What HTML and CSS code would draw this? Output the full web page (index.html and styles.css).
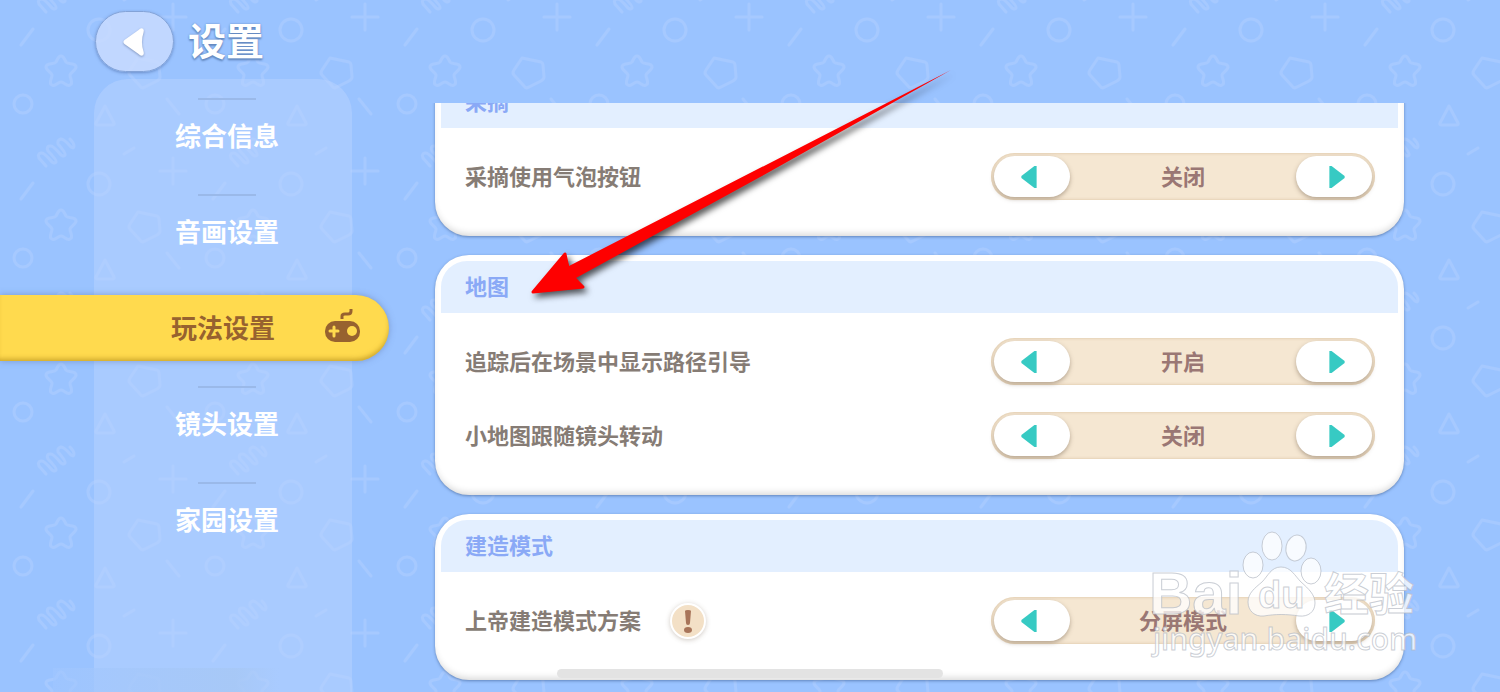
FILE: index.html
```html
<!DOCTYPE html>
<html lang="zh-CN">
<head>
    <meta charset="UTF-8" />
    <meta name="viewport" content="width=device-width, initial-scale=1.0" />
    <title>设置</title>
    <link rel="stylesheet" href="styles.css">
</head>
<body>
<!-- Background pattern -->
<svg class="pattern" aria-hidden="true">
    <defs>
        <pattern id="shapes" width="192" height="154" y="-22" patternUnits="userSpaceOnUse">
            <g transform="translate(0 21)" fill="none" stroke="#a6c9ff" stroke-width="3" stroke-linecap="round" stroke-linejoin="round">
                <circle cx="23" cy="105" r="9" />
                <circle cx="99" cy="31" r="11" />
                <path d="M61 57c2 0 3 2 5 6 2 3 10 0 10 5 0 3-5 5-6 8 0 4 4 8 0 10-3 2-6-3-9-3s-6 5-9 3c-4-2 0-6 0-10-1-3-6-5-6-8 0-5 8-2 10-5 2-4 3-6 5-6z" />
                <path d="M138 59l19 4q2 1 2 3l1 12q0 2-3 4l-12 6q-3 2-5-1l-10-11q-2-2 0-5z" />
                <path d="M105 107l9 17q1 2-2 2h-14q-3 0-2-2z" />
                <path d="M21 46l12-16M167 100l12 15M124 1l10-6M173 5v26M160 18h26" />
                <path d="M46 13l-7-8q-2-4 2-5 3-1 11 9 3 2 4 0 1-2-8-11-2-5 2-5 3-1 11 9 3 2 4 0 1-2-7-11-1-4 3-5 3 0 10 8 3 2 3-1 0-3-4-7" />
            </g>
        </pattern>
    </defs>
    <rect width="100%" height="100%" fill="url(#shapes)" />
</svg>

<header class="topbar">
    <button class="back-btn" type="button" aria-label="返回">
        <svg width="26" height="36" viewBox="0 0 24 34"><path d="M19 4q3 0 2 4-3 9 0 18 1 4-2 4-1 0-3-2L3 19q-2-2 0-4L16 6q2-2 3-2z" fill="#fff" /></svg>
    </button>
    <h1>设置</h1>
</header>

<div class="content">
    <nav class="sidebar">
        <a class="nav-item" href="#info">综合信息</a>
        <a class="nav-item" href="#av">音画设置</a>
        <a class="nav-item active" href="#play" aria-current="page">
            <span>玩法设置</span>
            <svg width="36" height="36" viewBox="0 0 36 36" aria-hidden="true">
                <path d="M17 11V8q0-2 3-2h3q3 0 3-3V1" fill="none" stroke="#97622f" stroke-width="3" />
                <rect x="0" y="13" width="35" height="21" rx="10" fill="#97622f" />
                <path d="M9 19v9M5 23h8" stroke="#ffda4e" stroke-width="3" stroke-linecap="round" />
                <circle cx="27" cy="23" r="5" fill="#ffda4e" />
            </svg>
        </a>
        <a class="nav-item" href="#camera">镜头设置</a>
        <a class="nav-item" href="#home">家园设置</a>
    </nav>

    <main class="panel" id="play">
        <section class="card">
            <h2>采摘</h2>
            <div class="rows">
                <div class="row">
                    <span class="label" id="bubble">采摘使用气泡按钮</span>
                    <div class="switcher" role="group" aria-labelledby="bubble">
                        <button class="prev" type="button" aria-label="上一项"><svg width="18" height="24" viewBox="0 0 16 22"><path d="M15 1v20h-2L1 12v-2L13 1z" /></svg></button>
                        <output>关闭</output>
                        <button class="next" type="button" aria-label="下一项"><svg width="18" height="24" viewBox="0 0 16 22"><path d="M1 1v20h2l12-9v-2L3 1z" /></svg></button>
                    </div>
                </div>
            </div>
        </section>

        <section class="card">
            <h2>地图</h2>
            <div class="rows">
                <div class="row">
                    <span class="label" id="track">追踪后在场景中显示路径引导</span>
                    <div class="switcher" role="group" aria-labelledby="track">
                        <button class="prev" type="button" aria-label="上一项"><svg width="18" height="24" viewBox="0 0 16 22"><path d="M15 1v20h-2L1 12v-2L13 1z" /></svg></button>
                        <output>开启</output>
                        <button class="next" type="button" aria-label="下一项"><svg width="18" height="24" viewBox="0 0 16 22"><path d="M1 1v20h2l12-9v-2L3 1z" /></svg></button>
                    </div>
                </div>
                <div class="row">
                    <span class="label" id="minimap">小地图跟随镜头转动</span>
                    <div class="switcher" role="group" aria-labelledby="minimap">
                        <button class="prev" type="button" aria-label="上一项"><svg width="18" height="24" viewBox="0 0 16 22"><path d="M15 1v20h-2L1 12v-2L13 1z" /></svg></button>
                        <output>关闭</output>
                        <button class="next" type="button" aria-label="下一项"><svg width="18" height="24" viewBox="0 0 16 22"><path d="M1 1v20h2l12-9v-2L3 1z" /></svg></button>
                    </div>
                </div>
            </div>
        </section>

        <section class="card">
            <h2>建造模式</h2>
            <div class="rows">
                <div class="row">
                    <span class="label" id="build">上帝建造模式方案</span>
                    <button class="hint-btn" type="button" aria-label="说明">
                        <svg width="8" height="24" viewBox="0 0 8 24"><path d="M1 2q0-1 3-1t3 1L6 14q0 2-2 2t-2-2z" fill="#a8755a" /><ellipse cx="4" cy="21" rx="4" ry="3" fill="#a8755a" /></svg>
                    </button>
                    <div class="switcher" role="group" aria-labelledby="build">
                        <button class="prev" type="button" aria-label="上一项"><svg width="18" height="24" viewBox="0 0 16 22"><path d="M15 1v20h-2L1 12v-2L13 1z" /></svg></button>
                        <output>分屏模式</output>
                        <button class="next" type="button" aria-label="下一项"><svg width="18" height="24" viewBox="0 0 16 22"><path d="M1 1v20h2l12-9v-2L3 1z" /></svg></button>
                    </div>
                </div>
            </div>
        </section>
    </main>
</div>

<div class="uid-mask"></div>
<div class="home-bar"></div>

<!-- Pointer to the map section -->
<svg class="arrow" width="440" height="250" viewBox="520 60 440 250" aria-hidden="true">
    <path d="M532 293L565 254L569 266L951 70L762 176L576 278L584 288Z" fill="#fe0000" />
    <path d="M533 292L565 254L568 268L573 277L583 287Z" fill="#fe0000" stroke="#fe0000" stroke-width="3" stroke-linejoin="round" />
</svg>

<!-- Watermark -->
<svg class="watermark" width="280" height="136" viewBox="1145 525 280 136">
    <g class="mark">
        <ellipse cx="1253" cy="565" rx="10" ry="13" />
        <ellipse cx="1272" cy="546" rx="10" ry="14" />
        <ellipse cx="1296" cy="548" rx="10" ry="13" transform="rotate(12 1296 548)" />
        <ellipse cx="1311" cy="571" rx="10" ry="13" />
        <path d="M1281 567c10 0 14 9 20 15 8 7 14 13 14 21 0 9-7 14-16 13-12-2-24-2-35 0-9 1-16-5-16-14 0-9 7-14 14-20 6-6 9-15 19-15z" />
        <text class="wm-bai" x="1149" y="614">Bai</text>
        <text class="wm-du" x="1258" y="608">du</text>
        <text class="wm-cn" x="1324" y="611">经验</text>
        <text class="wm-url" x="1153" y="650">jingyan.baidu.com</text>
    </g>
</svg>
</body>
</html>
```
FILE: styles.css
```css
/* Base */
* {
    box-sizing: border-box;
    margin: 0;
    padding: 0;
}

body {
    font-family: "Noto Sans CJK SC", sans-serif;
    font-weight: 700;
    background: #9ac3ff;
    height: 100vh;
    overflow: hidden;
    display: flex;
    flex-direction: column;
    position: relative;
}

button {
    border: none;
    cursor: pointer;
    display: flex;
    align-items: center;
    justify-content: center;
}

.pattern {
    position: absolute;
    inset: 0;
    width: 100%;
    height: 100%;
    z-index: -1;
}

/* Top bar */
.topbar {
    display: flex;
    align-items: center;
    gap: 14px;
    padding: 11px 0 0 95px;
}

.back-btn {
    width: 79px;
    height: 61px;
    padding-right: 2px;
    border-radius: 31px;
    background: rgba(203, 220, 255, 0.8);
    border: 1px solid #83a3d8;
    box-shadow: 0 1px 3px rgba(60, 90, 150, 0.5);
}

.back-btn svg {
    filter: drop-shadow(0 1px 1px rgba(70, 90, 130, 0.5));
}

.topbar h1 {
    height: 61px;
    font-size: 38px;
    line-height: 56px;
    color: #fff;
    text-shadow: 0 0 2px #6489c0, 0 2px 2px #6489c0;
}

.content {
    flex: 1;
    min-height: 0;
    display: flex;
}

/* Sidebar */
.sidebar {
    width: 258px;
    flex-shrink: 0;
    margin: 7px 83px 0 94px;
    padding-top: 19px;
    border-radius: 34px 34px 0 0;
    background: rgba(186, 212, 255, 0.48);
}

.nav-item {
    position: relative;
    display: flex;
    align-items: center;
    justify-content: center;
    height: 96px;
    padding: 0 0 24px 8px;
    font-size: 26px;
    color: #fff;
    text-decoration: none;
}

/* Short line above each entry */
.nav-item::before {
    content: "";
    position: absolute;
    top: 0;
    left: 104px;
    width: 58px;
    height: 2px;
    background: #9ab9e9;
}

.nav-item.active {
    height: 66px;
    margin: 5px -37px 25px -94px;
    padding: 0 28px 4px 171px;
    justify-content: space-between;
    color: #97622f;
    background: #ffda4e;
    border-radius: 0 33px 33px 0;
    box-shadow: inset -1px -4px 5px -2px rgba(170, 130, 20, 0.6), 0 0 6px rgba(90, 110, 160, 0.5);
}

.nav-item.active::before {
    display: none;
}

/* Settings list, scrolled to its end */
.panel {
    flex: 1;
    min-width: 0;
    margin: 31px 86px 0 -10px;
    padding: 0 10px 12px;
    overflow: hidden;
    display: flex;
    flex-direction: column;
    justify-content: flex-end;
    gap: 19px;
}

.card {
    flex-shrink: 0;
    padding: 6px;
    border-radius: 34px;
    background: #fff;
    box-shadow: inset 0 -5px 7px -3px rgba(0, 0, 0, 0.16), 0 1px 3px rgba(50, 80, 130, 0.55);
}

.card h2 {
    height: 52px;
    line-height: 48px;
    padding-left: 24px;
    border-radius: 26px 26px 0 0;
    background: #e3efff;
    font-size: 22px;
    color: #8aa9f6;
}

.rows {
    display: flex;
    flex-direction: column;
    gap: 27px;
    padding: 25px 23px 30px 24px;
}

.row {
    display: flex;
    align-items: center;
    height: 47px;
}

.label {
    padding-bottom: 4px;
    font-size: 22px;
    color: #867c75;
}

/* Option switcher */
.switcher {
    display: flex;
    align-items: center;
    justify-content: space-between;
    width: 384px;
    height: 47px;
    margin-left: auto;
    padding: 0 3px;
    border-radius: 24px;
    background: #f5e7d2;
    box-shadow: inset 0 0 3px rgba(190, 150, 100, 0.5);
}

.switcher button {
    width: 76px;
    height: 41px;
    border-radius: 21px;
    background: #fff;
    box-shadow: 0 2px 4px rgba(120, 100, 80, 0.5);
}

.switcher .prev {
    padding-right: 6px;
}

.switcher .next {
    padding-left: 6px;
}

.switcher svg {
    fill: #37cac3;
}

.switcher output {
    padding-bottom: 4px;
    font-size: 22px;
    color: #9a7774;
}

.hint-btn {
    width: 36px;
    height: 36px;
    margin-left: 29px;
    border: 2px solid #fff;
    border-radius: 50%;
    background: #f3e0c6;
    box-shadow: 0 1px 5px rgba(100, 80, 60, 0.3);
}

/* Overlays */
.uid-mask {
    position: absolute;
    left: 53px;
    bottom: 0;
    width: 227px;
    height: 24px;
    background: linear-gradient(90deg, rgba(160, 198, 255, 0.6), rgba(167, 200, 246, 0.9) 80%, rgba(167, 202, 255, 0));
}

.home-bar {
    position: absolute;
    left: 50%;
    bottom: 14px;
    width: 386px;
    height: 9px;
    border-radius: 5px;
    background: #e3e3e3;
    transform: translateX(-50%);
}

.arrow {
    position: absolute;
    top: 60px;
    left: 520px;
    filter: drop-shadow(3px 4px 3px rgba(0, 0, 0, 0.65));
    pointer-events: none;
}

.watermark {
    position: absolute;
    right: 75px;
    bottom: 31px;
    overflow: visible;
    pointer-events: none;
}

.mark {
    fill: #fff;
    fill-opacity: 0.75;
    stroke: #b4b9c3;
    stroke-opacity: 0.7;
    stroke-width: 1;
}

.wm-bai {
    font: 700 60px "Liberation Sans", sans-serif;
}

.wm-du {
    font: 700 38px "Liberation Sans", sans-serif;
}

.wm-cn {
    font: 700 45px "Noto Sans CJK SC", sans-serif;
}

.wm-url {
    font: 500 30px "Noto Sans", sans-serif;
}
```
